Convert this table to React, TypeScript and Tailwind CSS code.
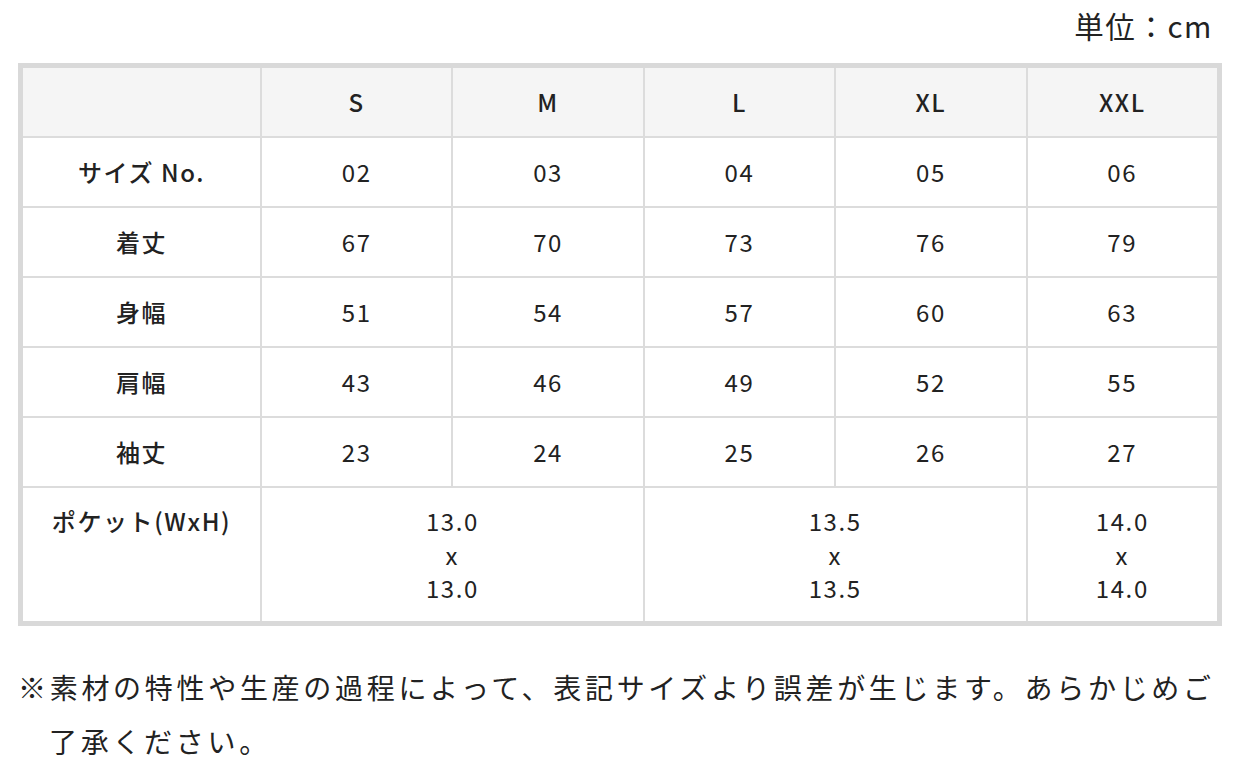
import React from "react";

const sizes = ["S", "M", "L", "XL", "XXL"];

const rows: { label: string; values: string[] }[] = [
  { label: "サイズ No.", values: ["02", "03", "04", "05", "06"] },
  { label: "着丈", values: ["67", "70", "73", "76", "79"] },
  { label: "身幅", values: ["51", "54", "57", "60", "63"] },
  { label: "肩幅", values: ["43", "46", "49", "52", "55"] },
  { label: "袖丈", values: ["23", "24", "25", "26", "27"] },
];

const pockets = [
  { w: "13.0", h: "13.0", span: "col-span-2" },
  { w: "13.5", h: "13.5", span: "col-span-2" },
  { w: "14.0", h: "14.0", span: "col-span-1" },
];

export default function App() {
  return (
    <div
      className="min-h-[778px] bg-white pl-[18px] pr-[14px] text-[#222222] tracking-[0.1em]"
      style={{ fontFamily: '"Noto Sans CJK JP", "Noto Sans", sans-serif' }}
    >
      {/* unit */}
      <div className="flex justify-end pt-[5px] pr-[9px] mb-[18px] text-[29.5px] leading-[40px]">
        単位：cm
      </div>

      {/* size table */}
      <div className="border-[5px] border-[#d9d9d9] bg-[#dcdcdc]">
        <div className="grid grid-cols-[237px_repeat(5,1fr)] gap-[2px] text-[24px]">
          <div className="h-[68px] bg-[#f5f5f5]" />
          {sizes.map((s) => (
            <div
              key={s}
              className="flex h-[68px] items-center justify-center bg-[#f5f5f5] font-medium"
            >
              {s}
            </div>
          ))}

          {rows.map((row) => (
            <React.Fragment key={row.label}>
              <div className="flex h-[68px] items-center justify-center bg-white font-medium">
                {row.label}
              </div>
              {row.values.map((v, i) => (
                <div
                  key={i}
                  className="flex h-[68px] items-center justify-center bg-white"
                >
                  {v}
                </div>
              ))}
            </React.Fragment>
          ))}

          <div className="bg-white py-[16px] text-center font-medium leading-[1.4]">
            ポケット(WxH)
          </div>
          {pockets.map((p) => (
            <div
              key={p.w}
              className={`${p.span} flex flex-col items-center bg-white py-[16px] leading-[1.4]`}
            >
              <span>{p.w}</span>
              <span>x</span>
              <span>{p.h}</span>
            </div>
          ))}
        </div>
      </div>

      {/* note */}
      <p className="mt-[34px] mr-[-12px] pl-[31px] -indent-[31px] text-[28px] leading-[54px] tracking-[3.7px]">
        ※素材の特性や生産の過程によって、表記サイズより誤差が生じます。あらかじめご了承ください。
      </p>
    </div>
  );
}
